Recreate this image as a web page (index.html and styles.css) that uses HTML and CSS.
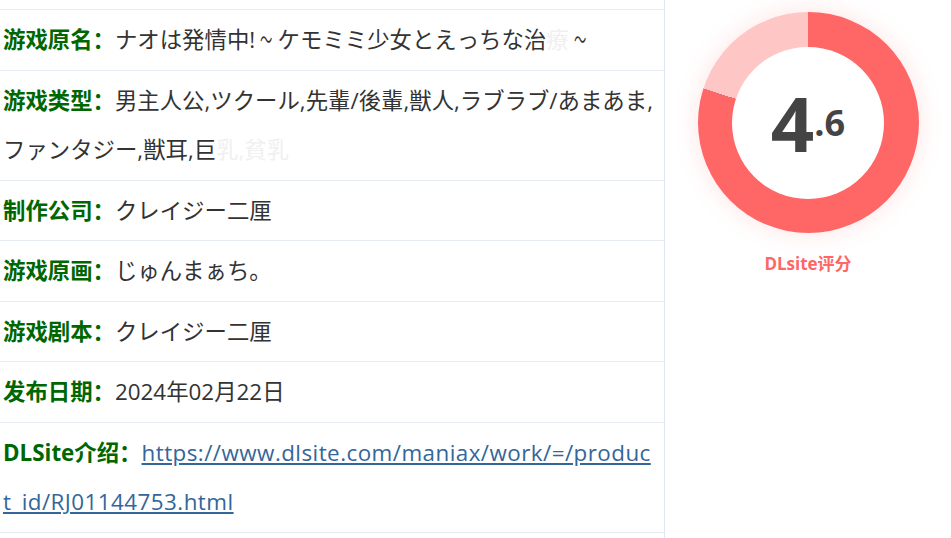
FILE: index.html
```html
<!DOCTYPE html>
<html lang="zh-CN">
<head>
    <meta charset="UTF-8">
    <meta name="viewport" content="width=device-width, initial-scale=1.0">
    <title>ナオは発情中!</title>
    <link rel="stylesheet" href="styles.css">
</head>
<body>
    <div class="page">
        <ul class="info">
            <li><b>游戏原名：</b>ナオは発情中!<span class="wave">～</span>ケモミミ少女とえっちな治<span class="blur">療</span><span class="wave">～</span></li>
            <li><b>游戏类型：</b>男主人公,ツクール,先輩/後輩,獣人,ラブラブ/あまあま,ファンタジー,獣耳,巨<span class="blur">乳,貧乳</span></li>
            <li><b>制作公司：</b>クレイジー二厘</li>
            <li><b>游戏原画：</b>じゅんまぁち。</li>
            <li><b>游戏剧本：</b>クレイジー二厘</li>
            <li><b>发布日期：</b>2024年02月22日</li>
            <li><b>DLSite介绍：</b><a class="link" href="#">https://www.dlsite.com/maniax/work/=/product_id/RJ01144753.html</a></li>
        </ul>
        <aside class="score">
            <div class="donut">
                <div class="donut-inner">
                    <span class="big">4</span><span class="small">.6</span>
                </div>
            </div>
            <p class="score-label">DLsite评分</p>
        </aside>
    </div>
</body>
</html>
```

FILE: styles.css
```css
:root {
    --clr-label: #006600;
    --clr-text: #333;
    --clr-line: #e6ecf1;
    --clr-score: #ff6666;
    --clr-score-light: #ffc6c6;
}

* {
    box-sizing: border-box;
    margin: 0;
    padding: 0;
}

body {
    font-family: 'Open Sans', 'Noto Sans CJK SC', sans-serif;
    background-color: #fff;
    color: var(--clr-text);
}

.page {
    display: flex;
    min-height: 538px;
}

.info {
    list-style: none;
    width: 665px;
    padding-top: 9px;
    border-right: 1px solid #dce9f5;
}

.info li {
    font-size: 22.4px;
    line-height: 49.5px;
    padding: 5px 7px 5px 3px;
    border-top: 1px solid var(--clr-line);
    word-break: break-all;
}

.info li:last-child {
    border-bottom: 1px solid var(--clr-line);
}

.info b {
    color: var(--clr-label);
    font-weight: 700;
}

.wave {
    display: inline-block;
    transform: scaleX(0.55);
}

.blur {
    color: #f0f0f0;
}

.link {
    color: #336699;
    text-decoration: underline;
    letter-spacing: 0.45px;
}

.score {
    flex: 1;
    display: flex;
    flex-direction: column;
    align-items: center;
    padding-top: 12px;
}

.donut {
    width: 221px;
    height: 221px;
    border-radius: 50%;
    background: conic-gradient(var(--clr-score) 0 80%, var(--clr-score-light) 80% 100%);
    box-shadow: 0 0 24px rgba(255, 102, 102, 0.18);
    display: flex;
    justify-content: center;
    align-items: center;
}

.donut-inner {
    width: 152px;
    height: 152px;
    border-radius: 50%;
    background-color: #fff;
    display: flex;
    justify-content: center;
    align-items: center;
    color: #444;
    font-family: 'Open Sans', sans-serif;
    font-weight: 700;
}

.big {
    font-size: 76px;
    line-height: 1;
}

.small {
    font-size: 36px;
    line-height: 1;
}

.score-label {
    margin-top: 17px;
    font-size: 17px;
    font-weight: 700;
    color: var(--clr-score);
}
```
